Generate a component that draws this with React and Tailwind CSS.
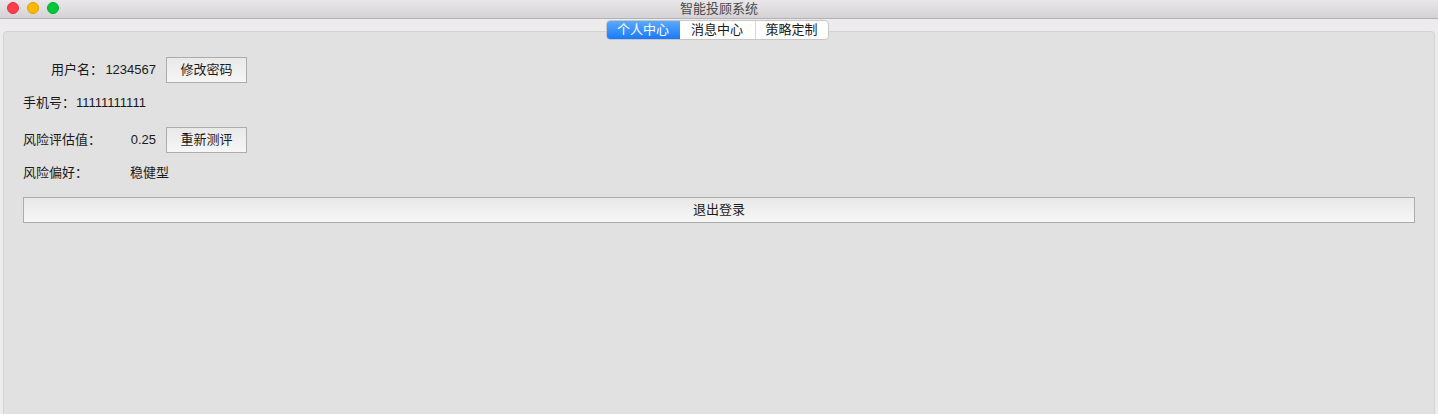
import React from "react";

const font = { fontFamily: '"Liberation Sans", "Noto Sans CJK SC", sans-serif' };

function Btn({ children, className = "" }) {
  return (
    <button
      className={`h-[26px] border border-[#acacac] bg-linear-to-b from-[#e9e9e9] to-[#f6f6f6] text-[13px] text-[#1a1a1a] flex items-center justify-center ${className}`}
    >
      {children}
    </button>
  );
}

export default function App() {
  return (
    <div className="w-[1438px] h-[414px] bg-[#ececec] overflow-hidden flex flex-col text-[13px] text-[#1a1a1a]" style={font}>
      {/* title bar */}
      <div className="relative h-[19px] shrink-0 bg-linear-to-b from-[#e9e7e9] to-[#d4d2d4] border-b border-[#b3b1b3] flex items-center justify-center">
        <div className="absolute left-[7px] top-[2px] flex gap-[8px]">
          <span className="w-[12px] h-[12px] rounded-full bg-[#ff3d4a] border border-[#e2303c]" />
          <span className="w-[12px] h-[12px] rounded-full bg-[#ffb700] border border-[#e0a000]" />
          <span className="w-[12px] h-[12px] rounded-full bg-[#00c83b] border border-[#00ae32]" />
        </div>
        <span className="text-[13px] leading-none text-[#4a4a4a] -mt-[1px]">智能投顾系统</span>
      </div>

      {/* tabs */}
      <div className="relative z-10 mt-[1px] flex justify-center h-[20px] shrink-0 pr-[4px]">
        <div className="flex h-[20px] rounded-[4px] border border-[#c6c6c6] bg-white overflow-hidden">
          <div className="w-[73px] flex items-center justify-center bg-linear-to-b from-[#5aa8fe] to-[#1579fa] text-white">个人中心</div>
          <div className="w-[76px] flex items-center justify-center border-r border-[#d6d6d6]">消息中心</div>
          <div className="w-[72px] flex items-center justify-center">策略定制</div>
        </div>
      </div>

      {/* panel */}
      <div className="px-[3px] flex-1 -mt-[9px] -mb-[12px]">
        <div className="h-full rounded-[4px] border border-[#d3d3d3] bg-[#e1e1e1] px-[19px] pt-[25px]">
          <div className="flex items-center h-[26px]">
            <span className="w-[80px] text-right">用户名：</span>
            <span className="w-[53px] text-right">1234567</span>
            <Btn className="ml-[10px] w-[81px]">修改密码</Btn>
          </div>
          <div className="flex items-center h-[20px] mt-[10px]">
            <span className="w-[53px]">手机号：</span>
            <span>11111111111</span>
          </div>
          <div className="flex items-center h-[26px] mt-[14px]">
            <span className="w-[80px]">风险评估值：</span>
            <span className="w-[53px] text-right">0.25</span>
            <Btn className="ml-[10px] w-[81px]">重新测评</Btn>
          </div>
          <div className="flex items-center h-[20px] mt-[10px]">
            <span className="w-[107px]">风险偏好：</span>
            <span>稳健型</span>
          </div>
          <Btn className="mt-[14px] w-full">退出登录</Btn>
        </div>
      </div>
    </div>
  );
}
